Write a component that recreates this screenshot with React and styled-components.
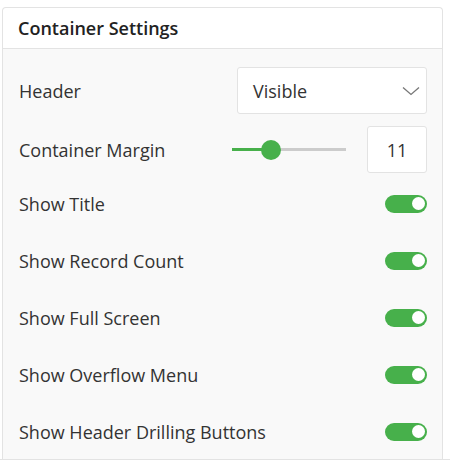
import React from "react";
import styled, { createGlobalStyle } from "styled-components";

const Global = createGlobalStyle`
  html, body { margin: 0; padding: 0; background: #fff; }
  body { font-family: "Open Sans", "Noto Sans", sans-serif; }
`;

const Page = styled.div`
  height: 460px;
  box-sizing: border-box;
  padding-top: 7px;
  border-bottom: 1px solid #e3e3e3;
  overflow: hidden;
`;

const Panel = styled.section`
  margin-left: 2px;
  width: 441px;
  box-sizing: border-box;
  border: 1px solid #e3e3e3;
  border-bottom: none;
  border-radius: 4px 4px 0 0;
  background: #f9f9f9;
  height: 470px;
`;

const PanelHeader = styled.div`
  height: 40px;
  display: flex;
  align-items: center;
  padding: 0 15px;
  background: #fff;
  border-bottom: 1px solid #e3e3e3;
  border-radius: 4px 4px 0 0;
  font-size: 18px;
  font-weight: 600;
  color: #222;
`;

const Body = styled.div`
  padding: 18px 15px 0 16px;
  display: flex;
  flex-direction: column;
`;

const Row = styled.div`
  display: flex;
  align-items: center;
  justify-content: space-between;
  height: ${(p) => (p.$toggle ? "57px" : "47px")};
  margin-bottom: ${(p) => (p.$toggle ? "0" : "12px")};
  margin-top: ${(p) => (p.$first ? "-10px" : "0")};
`;

const Label = styled.span`
  font-size: 18px;
  color: #333;
`;

const Select = styled.div`
  width: 190px;
  height: 47px;
  box-sizing: border-box;
  border: 1px solid #e3e3e3;
  border-radius: 3px;
  background: #fff;
  display: flex;
  align-items: center;
  justify-content: space-between;
  padding: 0 6px 0 15px;
  font-size: 18px;
  color: #333;
`;

const SliderGroup = styled.div`
  display: flex;
  align-items: center;
  gap: 21px;
`;

const Track = styled.div`
  position: relative;
  width: 114px;
  height: 3px;
  background: #cccccc;
`;

const Fill = styled.div`
  height: 100%;
  background: #47b04b;
`;

const Thumb = styled.div`
  position: absolute;
  top: 50%;
  width: 20px;
  height: 20px;
  margin-left: -10px;
  margin-top: -10px;
  border-radius: 50%;
  background: #47b04b;
`;

const NumberBox = styled.div`
  width: 60px;
  height: 47px;
  box-sizing: border-box;
  border: 1px solid #e3e3e3;
  border-radius: 3px;
  background: #fff;
  display: flex;
  align-items: center;
  justify-content: center;
  font-size: 18px;
  color: #333;
`;

const Toggle = styled.div`
  width: 42px;
  height: 18px;
  border-radius: 9px;
  background: #47b04b;
  display: flex;
  align-items: center;
  justify-content: flex-end;
  padding-right: 2px;
  box-sizing: border-box;
`;

const Knob = styled.div`
  width: 13px;
  height: 13px;
  border-radius: 50%;
  background: #fff;
`;

const Chevron = () => (
  <svg width="18" height="10" viewBox="0 0 18 10" fill="none">
    <path d="M1 1.5 L9 8.5 L17 1.5" stroke="#777" strokeWidth="1.3" />
  </svg>
);

const toggles = [
  "Show Title",
  "Show Record Count",
  "Show Full Screen",
  "Show Overflow Menu",
  "Show Header Drilling Buttons",
];

export default function App() {
  const pct = 39 / 114;
  return (
    <>
      <Global />
      <Page>
        <Panel>
          <PanelHeader>Container Settings</PanelHeader>
          <Body>
            <Row>
              <Label>Header</Label>
              <Select>
                <span>Visible</span>
                <Chevron />
              </Select>
            </Row>
            <Row>
              <Label>Container Margin</Label>
              <SliderGroup>
                <Track>
                  <Fill style={{ width: `${pct * 100}%` }} />
                  <Thumb style={{ left: `${pct * 100}%` }} />
                </Track>
                <NumberBox>11</NumberBox>
              </SliderGroup>
            </Row>
            {toggles.map((t, i) => (
              <Row key={t} $toggle $first={i === 0}>
                <Label>{t}</Label>
                <Toggle>
                  <Knob />
                </Toggle>
              </Row>
            ))}
          </Body>
        </Panel>
      </Page>
    </>
  );
}
